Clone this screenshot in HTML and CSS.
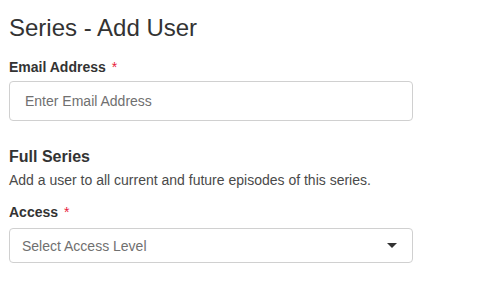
FILE: index.html
```html
<!DOCTYPE html>
<html lang="en">
<head>
<meta charset="utf-8">
<title>Series - Add User</title>
<link rel="stylesheet" href="styles.css">
</head>
<body>
<main class="page">
  <h1 class="title">Series - Add User</h1>
  <label class="label label-email" for="email">Email Address <span class="req">*</span></label>
  <input id="email" class="field field-input" type="text" placeholder="Enter Email Address">
  <h2 class="section">Full Series</h2>
  <p class="desc">Add a user to all current and future episodes of this series.</p>
  <label class="label label-access">Access <span class="req">*</span></label>
  <div class="field field-select">
    <span class="select-text">Select Access Level</span>
    <svg class="caret" width="10" height="5" viewBox="0 0 10 5"><path d="M0 0H10L5 5Z" fill="#333"/></svg>
  </div>
</main>
</body>
</html>
```
FILE: styles.css
```css
html, body {
  margin: 0;
  padding: 0;
  background: #fff;
}
body {
  font-family: "Liberation Sans", Arial, sans-serif;
  color: #333;
}
.page {
  padding: 13px 9px 0;
  width: 404px;
}
.title {
  margin: 0;
  font-size: 24px;
  line-height: 30px;
  font-weight: 400;
  color: #333;
}
.label {
  display: block;
  font-size: 14px;
  line-height: 20px;
  font-weight: 700;
  color: #333;
}
.label-email {
  margin-top: 14px;
  margin-bottom: 4px;
}
.label-access {
  margin-top: 12px;
  margin-bottom: 6px;
}
.req {
  color: #e8203c;
  font-weight: 400;
  margin-left: 2px;
}
.field {
  box-sizing: border-box;
  width: 404px;
  border: 1px solid #d0d0d0;
  border-radius: 4px;
  background: #fff;
  font-family: inherit;
  font-size: 14px;
  margin: 0;
  display: block;
}
.field-input {
  height: 40px;
  padding: 0 15px;
  color: #333;
  outline: none;
}
.field-input::placeholder {
  color: #707070;
  opacity: 1;
}
.section {
  margin: 25px 0 0;
  font-size: 16px;
  line-height: 22px;
  font-weight: 700;
  color: #333;
}
.desc {
  margin: 2px 0 0;
  font-size: 14px;
  line-height: 20px;
  color: #4a4a4a;
}
.field-select {
  height: 35px;
  padding: 0 15px 0 12px;
  display: flex;
  align-items: center;
  justify-content: space-between;
}
.select-text {
  color: #707070;
  line-height: 20px;
}
.caret {
  display: block;
}
```
